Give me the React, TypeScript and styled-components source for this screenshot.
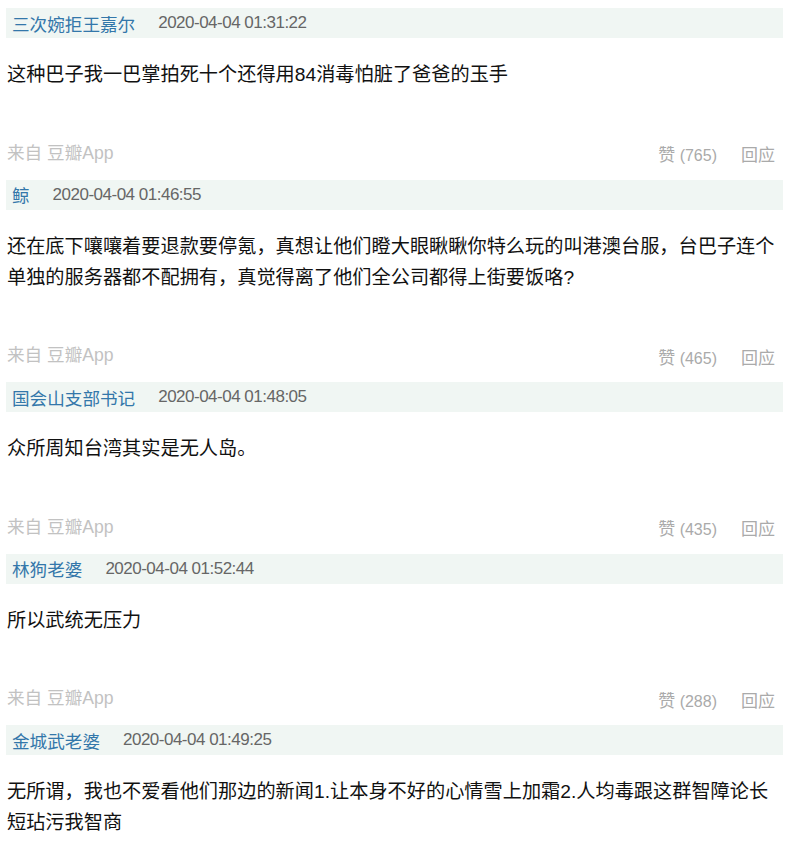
import styled, { createGlobalStyle } from 'styled-components';

const comments = [
  {
    id: 1,
    author: '三次婉拒王嘉尔',
    time: '2020-04-04 01:31:22',
    text: '这种巴子我一巴掌拍死十个还得用84消毒怕脏了爸爸的玉手',
    votes: 765,
  },
  {
    id: 2,
    author: '鲸',
    time: '2020-04-04 01:46:55',
    text: '还在底下嚷嚷着要退款要停氪，真想让他们瞪大眼瞅瞅你特么玩的叫港澳台服，台巴子连个单独的服务器都不配拥有，真觉得离了他们全公司都得上街要饭咯?',
    votes: 465,
  },
  {
    id: 3,
    author: '国会山支部书记',
    time: '2020-04-04 01:48:05',
    text: '众所周知台湾其实是无人岛。',
    votes: 435,
  },
  {
    id: 4,
    author: '林狗老婆',
    time: '2020-04-04 01:52:44',
    text: '所以武统无压力',
    votes: 288,
  },
  {
    id: 5,
    author: '金城武老婆',
    time: '2020-04-04 01:49:25',
    text: '无所谓，我也不爱看他们那边的新闻1.让本身不好的心情雪上加霜2.人均毒跟这群智障论长短玷污我智商',
    votes: null,
  },
];

const GlobalStyle = createGlobalStyle`
  html, body {
    margin: 0;
    padding: 0;
    background: #fff;
  }
  body {
    font-family: "Liberation Sans", "Noto Sans CJK SC", sans-serif;
  }
`;

function App() {
  return (
    <>
      <GlobalStyle />
      <Page>
        {comments.map(({ id, author, time, text, votes }) => (
          <Comment key={id}>
            <Header>
              <Author>{author}</Author>
              <Time>{time}</Time>
            </Header>
            <Content>{text}</Content>
            {votes !== null && (
              <Footer>
                <Source>来自 豆瓣App</Source>
                <Actions>
                  <Vote>赞 ({votes})</Vote>
                  <Reply>回应</Reply>
                </Actions>
              </Footer>
            )}
          </Comment>
        ))}
      </Page>
    </>
  );
}

const Page = styled.div`
  padding: 8px 2px 0 6px;
`;

const Comment = styled.div`
  display: flex;
  flex-direction: column;
`;

const Header = styled.div`
  display: flex;
  align-items: center;
  height: 30px;
  padding-left: 6px;
  background-color: #f0f6f3;
`;

const Author = styled.a`
  margin-right: 23px;
  font-size: 17.6px;
  color: #37a;
  text-decoration: none;
`;

const Time = styled.span`
  font-size: 17px;
  letter-spacing: -0.5px;
  color: #666;
`;

const Content = styled.p`
  margin: 21px 0 0;
  padding-left: 1px;
  font-size: 19.2px;
  line-height: 31px;
  color: #111;
`;

const Footer = styled.div`
  display: flex;
  justify-content: space-between;
  align-items: center;
  height: 30px;
  margin: 46px 0 13.5px;
  padding: 0 8px 0 1px;
`;

const Source = styled.span`
  font-size: 17.6px;
  color: #c2c2c2;
`;

const Actions = styled.div`
  display: flex;
  gap: 24px;
  padding-top: 5px;
  font-size: 17px;
  color: #aaa;
`;

const Vote = styled.a`
  font-size: 16px;

  &::first-letter {
    font-size: 17px;
  }
`;

const Reply = styled.a`
  font-size: 17px;
`;

export default App;
